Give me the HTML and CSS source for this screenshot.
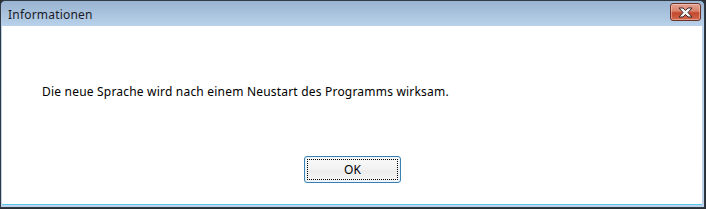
FILE: index.html
```html
<!DOCTYPE html>
<html>
<head>
	<title>Informationen</title>
	<link rel="stylesheet" href="styles.css">
</head>
<body>
	<div class="window">
		<div class="titlebar">
			<span class="title">Informationen</span>
			<button class="close" title="Schließen">
				<svg width="17" height="11" viewBox="0 0 17 11">
					<path d="M2 1 H6 L8.5 3.5 L11 1 H15 L11 5.5 L15 10 H11 L8.5 7.5 L6 10 H2 L6 5.5 Z" fill="#f4f4f4" stroke="#3a2a2a" stroke-width="1" stroke-linejoin="round"/>
				</svg>
			</button>
		</div>
		<div class="client">
			<div class="message">Die neue Sprache wird nach einem Neustart des Programms wirksam.</div>
			<div class="buttons">
				<button class="ok"><span class="focus">OK</span></button>
			</div>
		</div>
	</div>
</body>
</html>
```

FILE: styles.css
```css
html, body {
	margin: 0;
	padding: 0;
	background: #2a2f36;
}

body {
	width: 706px;
	height: 209px;
	font-family: "Noto Sans", "Open Sans", sans-serif;
	font-size: 12px;
	color: #000;
}

.window {
	box-sizing: border-box;
	width: 705px;
	height: 208px;
	border: 1px solid #303a46;
	border-radius: 5px 5px 0 0;
	background: linear-gradient(to bottom, #99b4d1 0, #b9d1ea 25px, #bcd3ea 100%);
	display: flex;
	flex-direction: column;
	overflow: hidden;
}

.titlebar {
	height: 25px;
	display: flex;
	align-items: center;
	justify-content: space-between;
	padding: 0 3px 0 7px;
	flex-shrink: 0;
}

.title {
	font-size: 12px;
	letter-spacing: 0.2px;
	color: #1a1a28;
	padding-top: 1px;
}

.close {
	width: 31px;
	height: 18px;
	margin-top: -3px;
	padding: 0;
	border: 1px solid #6b3328;
	border-radius: 3px;
	background: linear-gradient(to bottom, #e5a293 0, #d88169 45%, #c4472d 55%, #d06a4f 100%);
	box-shadow: inset 0 0 0 1px rgba(255, 220, 210, 0.45);
	display: flex;
	align-items: center;
	justify-content: center;
}

.client {
	flex: 1;
	background: #fff;
	margin: 0 2px 2px 1px;
	border-bottom: 1px solid #5cc8f0;
	display: flex;
	flex-direction: column;
}

.message {
	padding: 58px 0 0 40px;
	height: 72px;
	line-height: 16px;
	font-size: 12px;
	letter-spacing: 0.2px;
}

.buttons {
	display: flex;
	justify-content: center;
	padding-left: 1px;
}

.ok {
	width: 97px;
	height: 27px;
	padding: 2px;
	border: 1px solid #3c7fb1;
	border-radius: 3px;
	background: linear-gradient(to bottom, #fafafa 0, #f2f2f2 50%, #ebebeb 51%, #f6f6f6 100%);
	box-shadow: inset 0 0 0 1px #e8f4fb;
	font-family: "Noto Sans", "Open Sans", sans-serif;
	font-size: 12px;
	color: #000;
}

.focus {
	display: flex;
	align-items: center;
	justify-content: center;
	height: 100%;
	box-sizing: border-box;
	border: 1px dotted #000;
}
```
